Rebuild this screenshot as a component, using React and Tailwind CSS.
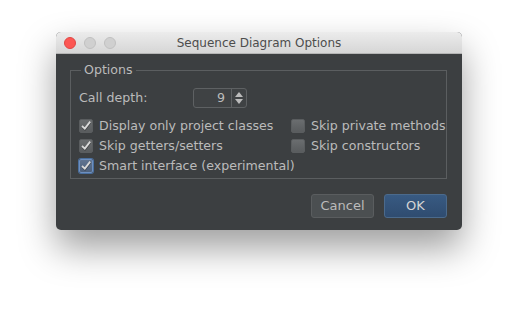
import { useState } from 'react'

const font = { fontFamily: '"DejaVu Sans", "Liberation Sans", sans-serif' }

function CheckBox({ checked, focused, label }) {
  return (
    <label className="flex items-center gap-[6px] h-[20px] whitespace-nowrap">
      <span
        className={
          'relative shrink-0 w-[14px] h-[14px] rounded-[2px] border flex items-center justify-center ' +
          (focused
            ? 'border-[#6d8fbf] bg-gradient-to-b from-[#5f7390] to-[#4e617c] ring-1 ring-[#4a6f9e]'
            : 'border-[#5a5d5f] bg-gradient-to-b from-[#6a6d6f] to-[#595c5e]')
        }
      >
        {checked && (
          <svg width="12" height="12" viewBox="0 0 12 12">
            <path d="M2.2 6.8 L5 9.4 L10.4 2.4" fill="none" stroke="#2a2c2d" strokeWidth="2" opacity="0.6" />
            <path d="M2 6 L4.8 8.6 L10.2 1.6" fill="none" stroke="#d8d8d8" strokeWidth="1.8" />
          </svg>
        )}
      </span>
      <span className="text-[12.6px] text-[#bbbbbb] leading-none">{label}</span>
    </label>
  )
}

export default function App() {
  const [depth] = useState(9)

  return (
    <div className="w-[518px] h-[310px] bg-white pt-[32px]" style={font}>
      <div className="mx-auto w-[406px] h-[198px] rounded-[5px] overflow-hidden bg-[#3c3f41] shadow-[0_18px_36px_rgba(0,0,0,0.38)] flex flex-col">
        {/* Title bar */}
        <div className="relative h-[22px] bg-gradient-to-b from-[#ececec] to-[#d6d6d6] flex items-center justify-center border-b border-[#b5b5b5]">
          <div className="absolute left-[8px] top-[5px] flex gap-[8px]">
            <span className="w-[12px] h-[12px] rounded-full bg-[#fc5753] border border-[#df4744]" />
            <span className="w-[12px] h-[12px] rounded-full bg-[#d0d0d0] border border-[#c0c0c0]" />
            <span className="w-[12px] h-[12px] rounded-full bg-[#d0d0d0] border border-[#c0c0c0]" />
          </div>
          <span className="text-[12px] text-[#4d4d4d]">Sequence Diagram Options</span>
        </div>

        {/* Content */}
        <div className="flex-1 flex flex-col px-[14px] pt-[8px]">
          <fieldset className="w-[377px] min-w-0 border border-[#5b5e60] pl-[8px] pr-[4px] pb-[2px]">
            <legend className="ml-[2px] px-[3px] text-[12.6px] text-[#bbbbbb] leading-[16px]">Options</legend>
            <div className="flex items-center h-[24px] mt-[8px]">
              <span className="text-[12.6px] text-[#bbbbbb] w-[114px]">Call depth:</span>
              <div className="flex h-[20px] border border-[#5e6163] rounded-[3px] bg-[#3f4244]">
                <span className="w-[38px] text-right pr-[6px] text-[12.6px] text-[#bbbbbb] leading-[18px] border-r border-[#5e6163]">{depth}</span>
                <span className="w-[14px] flex flex-col items-center justify-center gap-[2px]">
                  <svg width="8" height="5" viewBox="0 0 8 5"><path d="M0 5 L4 0 L8 5Z" fill="#bbbbbb" /></svg>
                  <svg width="8" height="5" viewBox="0 0 8 5"><path d="M0 0 L4 5 L8 0Z" fill="#bbbbbb" /></svg>
                </span>
              </div>
            </div>
            <div className="grid grid-cols-[212px_1fr] mt-[6px]">
              <CheckBox checked label="Display only project classes" />
              <CheckBox label="Skip private methods" />
              <CheckBox checked label="Skip getters/setters" />
              <CheckBox label="Skip constructors" />
              <CheckBox checked focused label="Smart interface (experimental)" />
            </div>
          </fieldset>

          <div className="flex justify-end gap-[10px] mt-[15px] pr-[1px]">
            <button className="w-[63px] h-[24px] rounded-[3px] border border-[#5a5d5f] bg-[#4b4f51] text-[13px] text-[#bbbbbb]">Cancel</button>
            <button className="w-[63px] h-[24px] rounded-[3px] border border-[#4b6a8c] bg-gradient-to-b from-[#385a82] to-[#2f4c70] text-[13px] text-[#d4d4d4]">OK</button>
          </div>
        </div>
      </div>
    </div>
  )
}
